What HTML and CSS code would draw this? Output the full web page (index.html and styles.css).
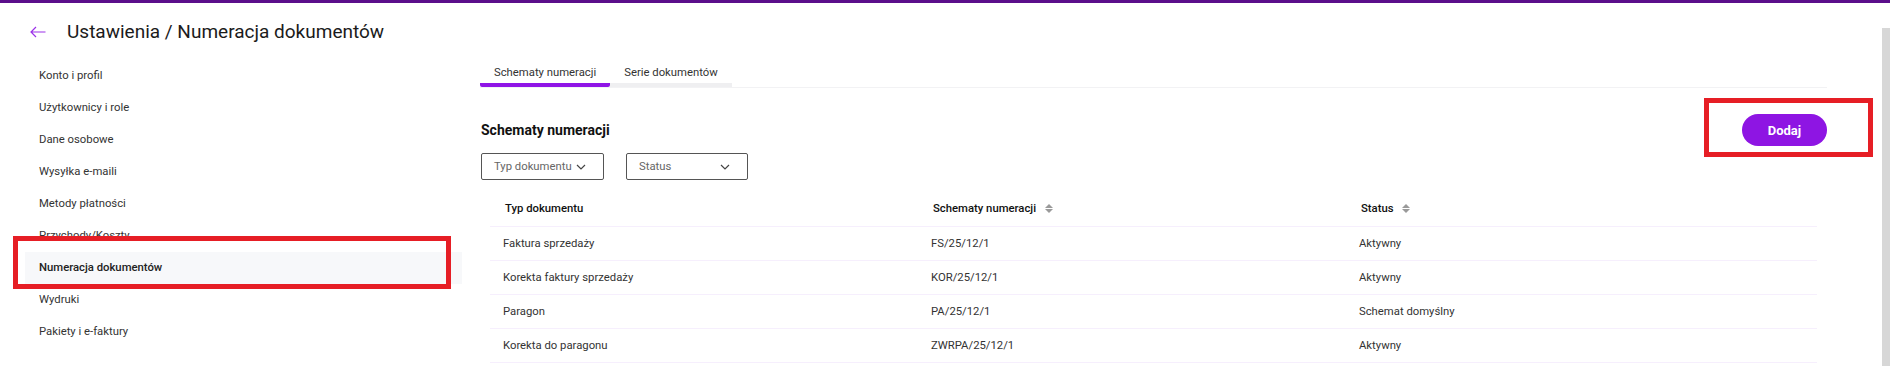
FILE: index.html
```html
<!DOCTYPE html>
<html lang="pl">
<head>
    <meta charset="UTF-8">
    <meta name="viewport" content="width=device-width, initial-scale=1.0">
    <title>Ustawienia - Numeracja dokumentów</title>
    <link rel="stylesheet" href="styles.css">
</head>
<body>
    <div class="topbar"></div>
    <div class="page">
        <div class="app">
            <div class="header">
                <svg class="back" width="16" height="12" viewBox="0 0 16 12"><path d="M15.5 6H1 M6 1L1 6l5 5" fill="none" stroke="#9b30e8" stroke-width="1.2"/></svg>
                <h1>Ustawienia / Numeracja dokumentów</h1>
            </div>

            <div class="layout">
                <!-- Menu ustawien -->
                <ul class="sidebar">
                    <li>Konto i profil</li>
                    <li>Użytkownicy i role</li>
                    <li>Dane osobowe</li>
                    <li>Wysyłka e-maili</li>
                    <li>Metody płatności</li>
                    <li>Przychody/Koszty</li>
                    <li class="active">Numeracja dokumentów</li>
                    <li>Wydruki</li>
                    <li>Pakiety i e-faktury</li>
                </ul>

                <div class="content">
                    <div class="tabs">
                        <div class="tab active">Schematy numeracji</div>
                        <div class="tab">Serie dokumentów</div>
                    </div>

                    <div class="section-head">
                        <h2>Schematy numeracji</h2>
                        <button class="add-button">Dodaj</button>
                    </div>

                    <div class="filters">
                        <div class="select select-type">Typ dokumentu <svg width="10" height="6" viewBox="0 0 10 6"><path d="M1 1l4 4 4-4" fill="none" stroke="#444" stroke-width="1.2"/></svg></div>
                        <div class="select select-status">Status <svg width="10" height="6" viewBox="0 0 10 6"><path d="M1 1l4 4 4-4" fill="none" stroke="#444" stroke-width="1.2"/></svg></div>
                    </div>

                    <table class="schemes">
                        <thead>
                            <tr>
                                <th class="col-type">Typ dokumentu</th>
                                <th class="col-scheme">Schematy numeracji <span class="sort"></span></th>
                                <th>Status <span class="sort"></span></th>
                            </tr>
                        </thead>
                        <tbody>
                            <tr><td>Faktura sprzedaży</td><td>FS/25/12/1</td><td>Aktywny</td></tr>
                            <tr><td>Korekta faktury sprzedaży</td><td>KOR/25/12/1</td><td>Aktywny</td></tr>
                            <tr><td>Paragon</td><td>PA/25/12/1</td><td>Schemat domyślny</td></tr>
                            <tr><td>Korekta do paragonu</td><td>ZWRPA/25/12/1</td><td>Aktywny</td></tr>
                        </tbody>
                    </table>
                </div>
            </div>
        </div>
        <div class="scrollbar"></div>
    </div>

    <!-- zaznaczenia na zrzucie -->
    <div class="mark mark-menu"></div>
    <div class="mark mark-add"></div>
</body>
</html>
```

FILE: styles.css
```css
body { margin: 0; font-family: Roboto, "Noto Sans", Arial, sans-serif; color: #222; background: #fff; position: relative; height: 366px; overflow: hidden; }
.topbar { height: 3px; background-color: #5b0e8b; }
.page { display: flex; }
.app { flex: 1; }
.scrollbar { width: 8px; margin-top: 25px; height: 338px; background-color: #d7d7d7; }

.header { display: flex; align-items: center; height: 57px; padding-left: 30px; }
.header .back { margin-right: 21px; }
.header h1 { margin: 0; font-size: 19px; font-weight: 400; color: #1b1b1b; }

.layout { display: flex; }
.sidebar { list-style: none; margin: 0 0 0 25px; padding: 0; width: 437px; }
.sidebar li { height: 32px; line-height: 32px; padding-left: 14px; font-size: 11.3px; color: #333; }
.sidebar li.active { background-color: #f7f8fa; color: #222; font-weight: 500; }

.content { flex: 1; margin-left: 18px; margin-right: 55px; }
.tabs { display: flex; border-bottom: 1px solid #f2f2f4; }
.tab { padding: 3px 14px 0; line-height: 20px; font-size: 11.3px; color: #333; border-bottom: 4px solid #efeff1; }
.tab.active { border-bottom-color: #8f14e6; border-radius: 2px; }

.section-head { display: flex; justify-content: space-between; align-items: center; margin-top: 26px; }
.section-head h2 { margin: 0 0 0 1px; font-size: 14px; font-weight: 700; color: #111; }
.add-button { width: 85px; height: 32px; border: none; border-radius: 16px; background-color: #8e15e3; color: #fff; font-family: inherit; font-size: 13px; font-weight: 700; }

.filters { display: flex; gap: 22px; margin-top: 7px; margin-left: 1px; }
.select { display: flex; align-items: center; justify-content: space-between; box-sizing: border-box; height: 27px; padding: 0 17px 0 12px; border: 1px solid #555; border-radius: 2px; font-size: 11.3px; color: #666; }
.select-type { width: 123px; }
.select-status { width: 122px; }

.schemes { border-collapse: collapse; margin: 15px 10px 0 10px; width: calc(100% - 20px); font-size: 11.3px; color: #333; }
.schemes th { text-align: left; font-weight: 500; color: #111; padding: 6px 13px 9px 15px; line-height: 16px; border-bottom: 1px solid #f6effd; }
.schemes td { height: 33px; padding: 0 13px; border-bottom: 1px solid #f6effd; }
.col-type { width: 400px; }
.col-scheme { width: 400px; }
.sort { display: inline-block; vertical-align: middle; margin-left: 6px; width: 0; height: 0; border-left: 4px solid transparent; border-right: 4px solid transparent; border-bottom: 4px solid #9a9a9a; position: relative; top: -3px; }
.sort::after { content: ""; position: absolute; left: -4px; top: 5px; border-left: 4px solid transparent; border-right: 4px solid transparent; border-top: 4px solid #9a9a9a; }

.mark { position: absolute; border: 5px solid #e61e25; box-sizing: border-box; }
.mark-menu { left: 13px; top: 236px; width: 438px; height: 53px; }
.mark-add { left: 1704px; top: 98px; width: 169px; height: 59px; }
```
